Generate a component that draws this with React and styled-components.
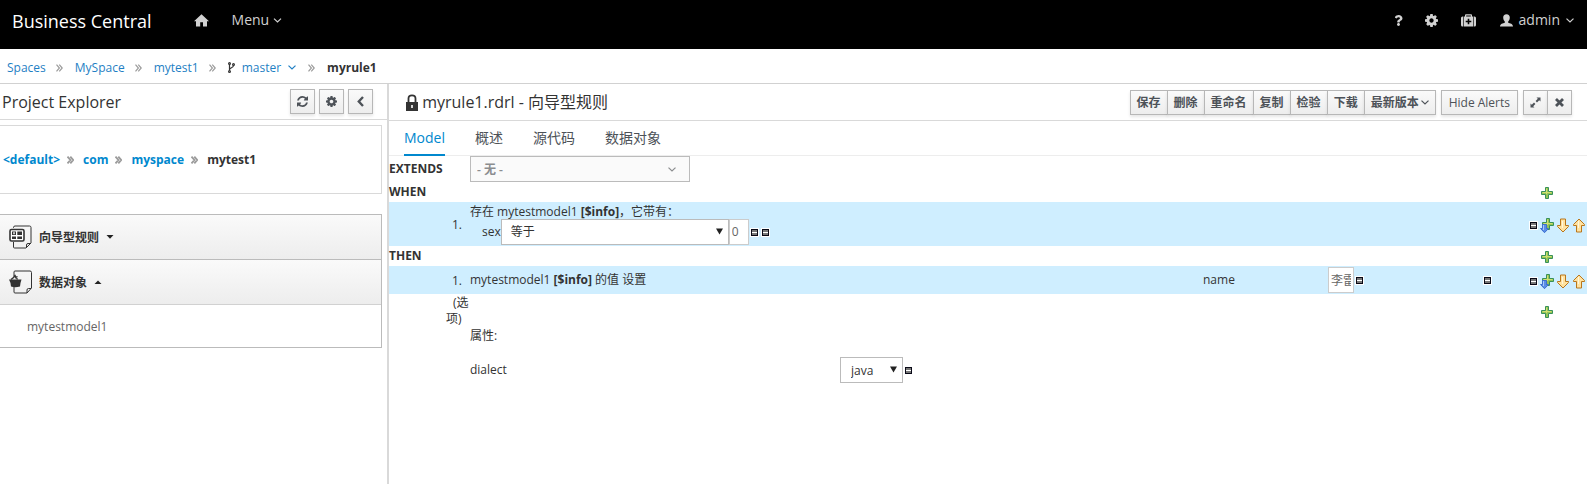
import React from "react";
import styled, { createGlobalStyle } from "styled-components";
import { FaQuestion } from "react-icons/fa";

const GlobalStyle = createGlobalStyle`
* {
    box-sizing: border-box;
}

body {
    margin: 0;
    background: #fff;
    color: #333;
    font-family: "Open Sans", "Noto Sans CJK SC", sans-serif;
    font-size: 12px;
    line-height: 16px;
}

button, input, select {
    font-family: inherit;
    font-size: 12px;
    margin: 0;
}

h1, h2, ul, ol {
    margin: 0;
    padding: 0;
    font-weight: normal;
    list-style: none;
}

svg {
    display: block;
    flex: none;
}
`

const Page = styled.div`
display: flex;
flex-direction: column;
min-height: 100vh;
`

const Navbar = styled.header`
display: flex;
align-items: center;
height: 49px;
padding: 0 13px 9px 12px;
background: #000;
color: #d1d1d1;
`

const Brand = styled.div`
padding-top: 2px;
margin-right: 42px;
font-size: 18px;
color: #fff;
`

const NavButton = styled.button`
display: flex;
align-items: center;
gap: ${(props) => props.$gap || 4}px;
padding: 0;
margin-left: ${(props) => props.$space || 0}px;
border: 0;
background: none;
color: #d1d1d1;
font-size: 14px;
line-height: 20px;
`

const NavRight = styled.div`
display: flex;
align-items: center;
margin-left: auto;
`

const Crumbs = styled.ol`
display: flex;
align-items: center;
height: 35px;
padding: 3px 7px 0;
border-bottom: 1px solid #d1d1d1;

li {
    display: flex;
    align-items: center;
}

a {
    color: #1f7fc4;
    text-decoration: none;
}
`

const CrumbIcon = styled.span`
margin: 0 ${(props) => props.$after || 12}px 0 ${(props) => props.$before || 10}px;
color: #9c9c9c;
`

const BranchButton = styled.button`
display: flex;
align-items: center;
gap: 7px;
padding: 0 2px 0 0;
border: 0;
background: none;
color: #1f7fc4;
`

const Body = styled.div`
display: flex;
flex: 1;
`

const Sidebar = styled.aside`
flex: none;
width: 389px;
border-right: 2px solid #d9d9d9;
`

const PanelHead = styled.div`
display: flex;
align-items: center;
height: ${(props) => props.$height}px;
padding: 0 ${(props) => props.$right}px 0 ${(props) => props.$left}px;
border-bottom: 1px solid #d9d9d9;
`

const PanelTitle = styled.h2`
flex: 1;
font-size: 16px;
line-height: 24px;
`

const ToolButton = styled.button`
display: inline-flex;
align-items: center;
justify-content: center;
gap: 2px;
height: 25px;
padding: 0 6px;
border: 1px solid #b7b7b7;
background: linear-gradient(#fafafa, #ededed);
box-shadow: 0 2px 3px rgba(3, 3, 3, 0.1);
color: #4d5258;
font-weight: 600;
white-space: nowrap;
`

const PlainButton = styled(ToolButton)`
padding: 0 7px;
font-weight: 400;
`

const IconButton = styled(ToolButton)`
width: 25px;
padding: 0;
`

const Buttons = styled.div`
display: flex;
gap: ${(props) => props.$gap}px;
`

const ButtonGroup = styled.div`
display: flex;

button + button {
    margin-left: -1px;
}
`

const PathBox = styled.ol`
display: flex;
align-items: center;
height: 69px;
margin: 5px 5px 20px 0;
padding: 0 3px;
border: 1px solid #d9d9d9;
border-left: 0;
font-weight: bold;

li {
    display: flex;
    align-items: center;
}

a {
    color: #0088ce;
    text-decoration: none;
}
`

const Accordion = styled.div`
margin-right: 5px;
border: 1px solid #bbb;
border-left: 0;
`

const AccordionHead = styled.button`
display: flex;
align-items: center;
width: 100%;
height: 45px;
padding: 0 9px;
border: 0;
border-bottom: 1px solid ${(props) => (props.$open ? "#d1d1d1" : "#bbb")};
background: linear-gradient(#fafafa, #ededed);
color: #333;
font-weight: bold;

span {
    margin: 0 7px;
}
`

const AccordionItem = styled.a`
display: block;
padding: 14px 27px 12px;
color: #666;
text-decoration: none;
`

const Main = styled.main`
flex: 1;
min-width: 0;
`

const Tabs = styled.div`
display: flex;
gap: 30px;
height: 35px;
padding: 0 15px;
border-bottom: 1px solid #ededed;
`

const Tab = styled.button`
height: 35px;
padding: 0;
border: 0;
border-bottom: 2px solid ${(props) => (props.$active ? "#0088ce" : "transparent")};
background: none;
color: ${(props) => (props.$active ? "#0088ce" : "#4d5258")};
font-size: 14px;
line-height: 20px;
`

const Row = styled.div`
display: grid;
grid-template-columns: 81px minmax(0, 1fr) 60px;
align-items: center;
height: ${(props) => props.$height}px;
background: ${(props) => (props.$filled ? "#cfeeff" : "none")};
`

const Heading = styled.div`
font-weight: bold;
`

const Index = styled.div`
padding-top: 2px;
padding-right: 8px;
text-align: right;
`

const Options = styled.div`
width: 24px;
margin-left: 57px;
text-indent: 7px;
`

const Actions = styled.div`
display: flex;
align-items: center;
gap: 2px;
padding: 2px 0 0 2px;
`

const PlusSlot = styled.div`
padding-top: 2px;
padding-left: 14px;
`

const ImageButton = styled.button`
display: block;
padding: 0;
border: 0;
background: none;
`

const SelectBox = styled.div`
position: relative;
flex: none;
width: ${(props) => props.$width}px;

select {
    display: block;
    width: 100%;
    height: 26px;
    padding: 0 ${(props) => props.$pad}px;
    appearance: none;
    border: 1px solid #bbb;
    border-radius: 0;
    background: ${(props) => (props.$muted ? "#fafafa" : "#fff")};
    color: ${(props) => (props.$muted ? "#8b8d8f" : "#333")};
    font-weight: ${(props) => (props.$muted ? 600 : 400)};
    opacity: 1;
}

svg {
    position: absolute;
    top: ${(props) => (props.$muted ? 11 : 9)}px;
    right: ${(props) => (props.$muted ? 14 : 6)}px;
    pointer-events: none;
    color: ${(props) => (props.$muted ? "#8b8d8f" : "#222")};
}
`

const ValueInput = styled.input`
width: ${(props) => props.$width}px;
height: 26px;
padding: 0 2px;
border: 1px solid #ccc;
color: #666;
`

const Constraint = styled.div`
display: flex;
align-items: center;
margin-top: -1px;
padding-left: 12px;
`

const MinusGroup = styled.div`
display: flex;
gap: 2px;
padding: 2px 0 0 1px;
`

const Assignment = styled.div`
display: grid;
grid-template-columns: minmax(0, 733fr) minmax(0, 125fr) minmax(0, 155fr) 44px;
align-items: center;
`

const Inline = styled.div`
display: flex;
align-items: center;
gap: 1px;
`

const Attribute = styled.div`
display: grid;
grid-template-columns: minmax(0, 370fr) minmax(0, 687fr);
align-items: center;
`

function CogIcon({ size }) {
    return (
        <svg width={size} height={size} viewBox="128 128 1536 1536" fill="currentColor">
            <path d="M1152 896q0-106-75-181t-181-75-181 75-75 181 75 181 181 75 181-75 75-181zm512-109v222q0 12-8 23t-20 13l-185 28q-19 54-39 91 35 50 107 138 10 12 10 25t-9 23q-27 37-99 108t-94 71q-12 0-26-9l-138-108q-44 23-91 38-16 136-29 186-7 28-36 28h-222q-14 0-24.5-8.5t-11.5-21.5l-28-184q-49-16-90-37l-141 107q-10 9-25 9-14 0-25-11-126-114-165-168-7-10-7-23 0-12 8-23 15-21 51-66.5t54-70.5q-27-50-41-99l-183-27q-13-2-21-12.5t-8-23.5v-222q0-12 8-23t19-13l186-28q14-46 39-92-40-57-107-138-10-12-10-24 0-10 9-23 26-36 98.5-107.5t94.5-71.5q13 0 26 10l138 107q44-23 91-38 16-136 29-186 7-28 36-28h222q14 0 24.5 8.5t11.5 21.5l28 184q49 16 90 37l142-107q9-9 24-9 13 0 25 10 129 119 165 170 7 8 7 22 0 12-8 23-15 21-51 66.5t-54 70.5q26 50 41 98l183 28q13 2 21 12.5t8 23.5z" />
        </svg>
    )
}

function RefreshIcon() {
    return (
        <svg width="11" height="11" viewBox="128 128 1536 1536" fill="currentColor">
            <path d="M1639 1056q0 5-1 7-64 268-268 434.5t-478 166.5q-146 0-282.5-55t-243.5-157l-129 129q-19 19-45 19t-45-19-19-45v-448q0-26 19-45t45-19h448q26 0 45 19t19 45-19 45l-137 137q71 66 161 102t187 36q134 0 250-65t186-179q11-17 53-117 8-23 30-23h192q13 0 22.5 9.5t9.5 22.5zm25-800v448q0 26-19 45t-45 19h-448q-26 0-45-19t-19-45 19-45l138-138q-148-137-349-137-134 0-250 65t-186 179q-11 17-53 117-8 23-30 23h-199q-13 0-22.5-9.5t-9.5-22.5v-7q65-268 270-434.5t480-166.5q146 0 284 55.5t245 156.5l130-129q19-19 45-19t45 19 19 45z" />
        </svg>
    )
}

function HomeIcon() {
    return (
        <svg width="15" height="13" viewBox="0 0 15 13" fill="currentColor">
            <path d="M7.5 0.3 15 7.3H13V12.6H9V8.2H6.2V12.6H2V7.3H0Z" />
        </svg>
    )
}

function ChevronDown({ width = 8 }) {
    return (
        <svg width={width} height="5" viewBox="0 0 8 5" fill="none" stroke="currentColor" strokeWidth="1.2">
            <path d="M0.5 0.6 4 4 7.5 0.6" />
        </svg>
    )
}

function DoubleAngle({ bold }) {
    return (
        <svg width="7" height="8" viewBox="0 0 7 8" fill="none" stroke="currentColor" strokeWidth={bold ? 1.8 : 1.2}>
            <path d="M0.5 0.6 3.4 4 0.5 7.4M3.3 0.6 6.2 4 3.3 7.4" />
        </svg>
    )
}

function MedkitIcon() {
    return (
        <svg width="15" height="13" viewBox="0 0 15 13" fill="currentColor">
            <path d="M2.2 2.5V12.5H1.5Q0 12.5 0 11V4Q0 2.5 1.5 2.5ZM12.8 2.5H13.5Q15 2.5 15 4V11Q15 12.5 13.5 12.5H12.8Z" />
            <path fillRule="evenodd" d="M2.8 2.5H4V1Q4 0.2 5 0.2H10Q11 0.2 11 1V2.5H12.2V12.5H2.8ZM5.2 2.5H9.8V1.4H5.2ZM6.7 4.7V6.7H4.7V8.3H6.7V10.3H8.3V8.3H10.3V6.7H8.3V4.7Z" />
        </svg>
    )
}

function UserIcon() {
    return (
        <svg width="13" height="13" viewBox="0 0 13 13" fill="currentColor">
            <path d="M6.5 0.3C8.7 0.3 9.8 1.6 9.8 3.6 9.8 5.5 9 6.9 8.2 7.6V8.7C10 9.3 13 9.8 13 12.6H0C0 9.8 3 9.3 4.8 8.7V7.6C4 6.9 3.2 5.5 3.2 3.6 3.2 1.6 4.3 0.3 6.5 0.3Z" />
        </svg>
    )
}

function BranchIcon() {
    return (
        <svg width="7" height="11" viewBox="0 0 7 11" fill="none" stroke="#333" strokeWidth="1.2">
            <circle cx="1.5" cy="1.6" r="0.9" />
            <circle cx="5.5" cy="2.4" r="0.9" />
            <circle cx="1.5" cy="9.4" r="0.9" />
            <path d="M1.5 2.6V8.4M5.5 3.4C5.5 6 1.8 5.4 1.5 7.6" />
        </svg>
    )
}

function AngleLeft() {
    return (
        <svg width="7" height="11" viewBox="0 0 7 11" fill="none" stroke="currentColor" strokeWidth="2.4">
            <path d="M6 1 1.8 5.5 6 10" />
        </svg>
    )
}

function LockIcon() {
    return (
        <svg width="12" height="17" viewBox="0 0 12 17" fill="#333">
            <path fillRule="evenodd" d="M0 8H12V17H0ZM5.2 11V14H6.8V11Z" />
            <path d="M2.5 8V4.5C2.5 0.2 9.5 0.2 9.5 4.5V8" fill="none" stroke="#333" strokeWidth="1.8" />
        </svg>
    )
}

function ExpandIcon() {
    return (
        <svg width="11" height="11" viewBox="0 0 11 11" fill="currentColor">
            <path d="M6.5 0.5H10.5V4.5L9.2 3.2 7 5.4 5.6 4 7.8 1.8ZM4.5 10.5H0.5V6.5L1.8 7.8 4 5.6 5.4 7 3.2 9.2Z" />
        </svg>
    )
}

function CloseIcon() {
    return (
        <svg width="9" height="9" viewBox="0 0 9 9" fill="none" stroke="currentColor" strokeWidth="2.8">
            <path d="M1 1 8 8M8 1 1 8" />
        </svg>
    )
}

function Triangle({ up }) {
    return (
        <svg width="8" height="4" viewBox="0 0 8 4" fill="#222">
            <path d={up ? "M0.5 4 4 0.4 7.5 4Z" : "M0.5 0 4 3.8 7.5 0Z"} />
        </svg>
    )
}

function SelectArrow() {
    return (
        <svg width="7" height="7" viewBox="0 0 7 7" fill="currentColor">
            <path d="M0 0.5H7L3.5 6.5Z" />
        </svg>
    )
}

function RuleIcon() {
    return (
        <svg width="23" height="24" viewBox="0 0 23 24" fill="none" stroke="#333">
            <path d="M4.5 3V2.5Q4.5 1 6 1H20.5Q22 1 22 2.5V18L17 23H5.5Q4.5 23 4.5 22V17M22 18.5H19Q17.5 18.5 17.5 20V23" />
            <rect x="1" y="4.5" width="14" height="11.5" rx="1.5" fill="#fff" strokeWidth="1.6" />
            <path d="M3 6.5H7V10H3ZM8.3 6.5H13V10H8.3ZM3 11.5H7V14H3ZM8.3 11.5H13V14H8.3Z" fill="#333" stroke="none" />
            <path d="M4 7.3 6 9.2M6 7.3 4 9.2" stroke="#fff" strokeWidth="0.8" />
        </svg>
    )
}

function DataIcon() {
    return (
        <svg width="23" height="24" viewBox="0 0 23 24" fill="none" stroke="#333">
            <path d="M5 6V2Q5 1 6 1H21Q22.5 1 22.5 2.5V18L18 23H6Q5 23 5 22V17M22 18.5H19.5Q18 18.5 18 20V23" />
            <path d="M0 9.5H12.5L11.5 13 11 16.5Q6 18 2 16.5L1.5 13Z" fill="#333" stroke="none" />
            <path d="M2 9.5 4.5 7.5 6 5.5 8.5 9.5M6 8 8.5 6.5" strokeWidth="1.4" />
        </svg>
    )
}

function PlusShape() {
    return (
        <>
            <path d="M4.5 0.5H7.5V4.5H11.5V7.5H7.5V11.5H4.5V7.5H0.5V4.5H4.5Z" fill="#94c455" stroke="#38915a" />
            <path d="M5.5 1.5V7M1.5 5.5H10.5" stroke="#cfe070" />
        </>
    )
}

function AddButton() {
    return (
        <ImageButton aria-label="add">
            <svg width="12" height="12" viewBox="0 0 12 12">
                <PlusShape />
            </svg>
        </ImageButton>
    )
}

function AddBelowButton() {
    return (
        <ImageButton aria-label="add below">
            <svg width="14" height="15" viewBox="0 0 14 15">
                <g transform="translate(2 0)">
                    <PlusShape />
                </g>
                <path d="M2.5 6.5H6.5V10.5H8.5L4.5 14.7 0.5 10.5H2.5Z" fill="#5b8ee6" stroke="#3d6fd0" />
                <path d="M3.5 7V12" stroke="#a9c8fa" />
            </svg>
        </ImageButton>
    )
}

function ArrowButton({ up }) {
    return (
        <ImageButton aria-label={up ? "move up" : "move down"}>
            <svg width="14" height="15" viewBox="-1 0 14 15">
                <path
                    d={up ? "M6 1 11.5 6.5V7.5H8.5V14H3.5V7.5H0.5V6.5Z" : "M3.5 1H8.5V7.5H11.5V8.5L6 14 0.5 8.5V7.5H3.5Z"}
                    fill="#ffe2a0"
                    stroke="#b9761c"
                />
                <path d="M5.5 3V10" stroke="#fff6dc" />
            </svg>
        </ImageButton>
    )
}

function RemoveButton() {
    return (
        <ImageButton aria-label="remove">
            <svg width="9" height="9" viewBox="0 0 9 9" shapeRendering="crispEdges">
                <rect width="9" height="9" fill="#fff" />
                <rect x="1" y="1" width="7" height="7" fill="#0a0a18" />
                <rect x="2" y="2" width="5" height="5" fill="#777" />
                <rect x="2" y="4" width="5" height="1" fill="#fff" />
            </svg>
        </ImageButton>
    )
}

function RowActions() {
    return (
        <Actions>
            <RemoveButton />
            <AddBelowButton />
            <ArrowButton />
            <ArrowButton up />
        </Actions>
    )
}

function TopBar() {
    return (
        <Navbar>
            <Brand>Business Central</Brand>
            <NavButton aria-label="home"><HomeIcon /></NavButton>
            <NavButton $space={23}>Menu <ChevronDown width={9} /></NavButton>
            <NavRight>
                <NavButton aria-label="help"><FaQuestion size={11} /></NavButton>
                <NavButton $space={21} aria-label="settings"><CogIcon size={13} /></NavButton>
                <NavButton $space={23} aria-label="support"><MedkitIcon /></NavButton>
                <NavButton $space={24} $gap={6}><UserIcon /> admin <ChevronDown /></NavButton>
            </NavRight>
        </Navbar>
    )
}

function Breadcrumbs() {
    return (
        <Crumbs>
            <li><a href="#spaces">Spaces</a></li>
            <CrumbIcon as="li"><DoubleAngle /></CrumbIcon>
            <li><a href="#myspace">MySpace</a></li>
            <CrumbIcon as="li"><DoubleAngle /></CrumbIcon>
            <li><a href="#mytest1">mytest1</a></li>
            <CrumbIcon as="li"><DoubleAngle /></CrumbIcon>
            <li>
                <BranchButton><BranchIcon /> master <ChevronDown /></BranchButton>
            </li>
            <CrumbIcon as="li"><DoubleAngle /></CrumbIcon>
            <li><b>myrule1</b></li>
        </Crumbs>
    )
}

function ProjectExplorer() {
    return (
        <Sidebar>
            <PanelHead $height={36} $left={2} $right={14}>
                <PanelTitle>Project Explorer</PanelTitle>
                <Buttons $gap={4}>
                    <IconButton aria-label="refresh"><RefreshIcon /></IconButton>
                    <IconButton aria-label="settings"><CogIcon size={11} /></IconButton>
                    <IconButton aria-label="collapse"><AngleLeft /></IconButton>
                </Buttons>
            </PanelHead>
            <PathBox>
                <li><a href="#default">&lt;default&gt;</a></li>
                <CrumbIcon as="li" $before={7} $after={9}><DoubleAngle bold /></CrumbIcon>
                <li><a href="#com">com</a></li>
                <CrumbIcon as="li" $before={7} $after={9}><DoubleAngle bold /></CrumbIcon>
                <li><a href="#myspace">myspace</a></li>
                <CrumbIcon as="li" $before={7} $after={9}><DoubleAngle bold /></CrumbIcon>
                <li>mytest1</li>
            </PathBox>
            <Accordion>
                <AccordionHead><RuleIcon /><span>向导型规则</span><Triangle /></AccordionHead>
                <AccordionHead $open><DataIcon /><span>数据对象</span><Triangle up /></AccordionHead>
                <AccordionItem href="#mytestmodel1">mytestmodel1</AccordionItem>
            </Accordion>
        </Sidebar>
    )
}

function EditorHead() {
    return (
        <PanelHead $height={37} $left={17} $right={15}>
            <LockIcon />
            <PanelTitle as="h1">&nbsp;myrule1.rdrl - 向导型规则</PanelTitle>
            <Buttons $gap={5}>
                <ButtonGroup>
                    <ToolButton>保存</ToolButton>
                    <ToolButton>删除</ToolButton>
                    <ToolButton>重命名</ToolButton>
                    <ToolButton>复制</ToolButton>
                    <ToolButton>检验</ToolButton>
                    <ToolButton>下载</ToolButton>
                    <ToolButton>最新版本<ChevronDown /></ToolButton>
                </ButtonGroup>
                <PlainButton>Hide Alerts</PlainButton>
                <ButtonGroup>
                    <IconButton aria-label="expand"><ExpandIcon /></IconButton>
                    <IconButton aria-label="close"><CloseIcon /></IconButton>
                </ButtonGroup>
            </Buttons>
        </PanelHead>
    )
}

function RuleEditor() {
    return (
        <>
            <Row $height={26}>
                <Heading as="label" htmlFor="extends">EXTENDS</Heading>
                <SelectBox $width={220} $pad={6} $muted>
                    <select id="extends" disabled>
                        <option>- 无 -</option>
                    </select>
                    <ChevronDown />
                </SelectBox>
            </Row>
            <Row $height={20}>
                <Heading>WHEN</Heading>
                <span />
                <PlusSlot><AddButton /></PlusSlot>
            </Row>
            <Row $height={44} $filled>
                <Index>1.</Index>
                <div>
                    <div>存在 mytestmodel1 <b>[$info]</b>，它带有：</div>
                    <Constraint>
                        <label htmlFor="operator">sex</label>
                        <SelectBox $width={228} $pad={9}>
                            <select id="operator">
                                <option>等于</option>
                            </select>
                            <SelectArrow />
                        </SelectBox>
                        <ValueInput $width={20} aria-label="sex value" defaultValue="0" />
                        <MinusGroup>
                            <RemoveButton />
                            <RemoveButton />
                        </MinusGroup>
                    </Constraint>
                </div>
                <RowActions />
            </Row>
            <Row $height={20}>
                <Heading>THEN</Heading>
                <span />
                <PlusSlot><AddButton /></PlusSlot>
            </Row>
            <Row $height={28} $filled>
                <Index>1.</Index>
                <Assignment>
                    <span>mytestmodel1 <b>[$info]</b> 的值 设置</span>
                    <label htmlFor="name">name</label>
                    <Inline>
                        <ValueInput id="name" $width={26} defaultValue="李雷" />
                        <RemoveButton />
                    </Inline>
                    <RemoveButton />
                </Assignment>
                <RowActions />
            </Row>
            <Row $height={34}>
                <Options>(选项)</Options>
                <span />
                <PlusSlot><AddButton /></PlusSlot>
            </Row>
            <Row $height={16}>
                <span />
                <span>属性:</span>
            </Row>
            <Row $height={52}>
                <span />
                <Attribute>
                    <label htmlFor="dialect">dialect</label>
                    <Inline>
                        <SelectBox $width={63} $pad={10}>
                            <select id="dialect">
                                <option>java</option>
                            </select>
                            <SelectArrow />
                        </SelectBox>
                        <RemoveButton />
                    </Inline>
                </Attribute>
            </Row>
        </>
    )
}

function App() {
    return (
        <Page>
            <GlobalStyle />
            <TopBar />
            <Breadcrumbs />
            <Body>
                <ProjectExplorer />
                <Main>
                    <EditorHead />
                    <Tabs>
                        <Tab $active>Model</Tab>
                        <Tab>概述</Tab>
                        <Tab>源代码</Tab>
                        <Tab>数据对象</Tab>
                    </Tabs>
                    <RuleEditor />
                </Main>
            </Body>
        </Page>
    )
}

export default App;
